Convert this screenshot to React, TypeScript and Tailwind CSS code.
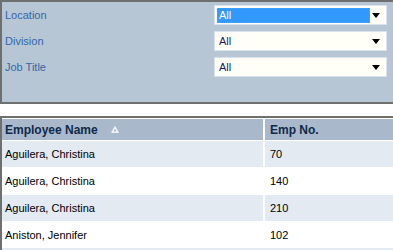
const rows = [
  { name: "Aguilera, Christina", no: "70" },
  { name: "Aguilera, Christina", no: "140" },
  { name: "Aguilera, Christina", no: "210" },
  { name: "Aniston, Jennifer", no: "102" },
];

const filters = ["Location", "Division", "Job Title"];

function Arrow() {
  return (
    <svg width="8" height="5" viewBox="0 0 8 5" className="shrink-0">
      <path d="M0 0H8L4 5Z" fill="#000" />
    </svg>
  );
}

function Select({ focused }: { focused?: boolean }) {
  return (
    <div className="flex items-center h-[20px] w-[173px] border border-[#d9e2ec] bg-[#fffff8] pl-[2px] pr-[6px]">
      {focused ? (
        <div className="flex items-center h-[15px] w-[153px] bg-[#3399ff] border border-dotted border-[#e8801c] pl-[1px] text-white">
          All
        </div>
      ) : (
        <div className="flex-1 pl-[2px] text-[#1a1a6e]">All</div>
      )}
      <div className="flex-1" />
      <Arrow />
    </div>
  );
}

export default function App() {
  return (
    <div className="w-[393px] h-[250px] overflow-hidden bg-white font-['Liberation_Sans',Arial,sans-serif] text-[11px]">
      <div className="w-[420px] h-[104px] bg-[#b7c6d5] border-t-2 border-l-2 border-b-2 border-[#6f6f6f] pt-[3px] flex flex-col gap-[6px]">
        {filters.map((f, i) => (
          <div key={f} className="flex items-center h-[20px]">
            <div className="w-[212px] pl-[3px] text-[#3366a8] text-[11px]">{f}</div>
            <Select focused={i === 0} />
          </div>
        ))}
      </div>
      <div className="mt-[12px] w-[420px] border-t-2 border-l-2 border-[#6f6f6f] pt-[1px]">
        <div className="flex h-[21px] items-center bg-[#a9b8ca] text-[#10294a] font-bold text-[12px]">
          <div className="w-[261px] pl-[3px] flex items-center gap-[13px]">
            Employee Name
            <svg width="8" height="7" viewBox="0 0 8 7">
              <path d="M4 0.5L7.5 6.5H0.5Z" fill="#fff" stroke="#fff" strokeWidth="0.6" />
              <path d="M4 2.5L5.8 5.6H2.2Z" fill="#a9b8ca" />
            </svg>
          </div>
          <div className="w-[2px] self-stretch bg-white" />
          <div className="pl-[5px]">Emp No.</div>
        </div>
        {rows.map((r, i) => (
          <div
            key={i}
            className={`flex h-[27px] items-center text-black border-t border-white ${
              i % 2 === 0 ? "bg-[#e3eaf2]" : "bg-white"
            }`}
          >
            <div className="w-[261px] pl-[3px]">{r.name}</div>
            <div className="w-[2px] self-stretch bg-white" />
            <div className="pl-[5px]">{r.no}</div>
          </div>
        ))}
        <div className="h-[2px] bg-[#e3eaf2]" />
      </div>
    </div>
  );
}
